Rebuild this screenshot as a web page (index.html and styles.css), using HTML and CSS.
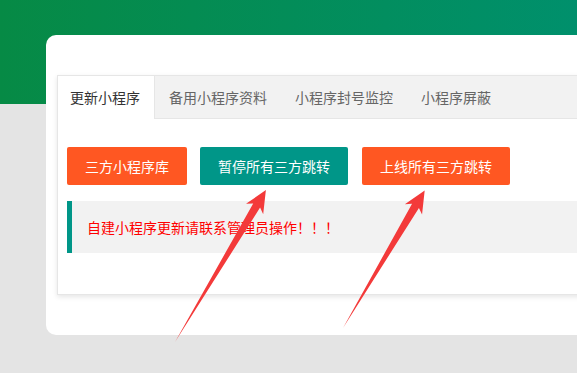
FILE: index.html
```html
<!DOCTYPE html>
<html lang="zh-CN">
<head>
  <meta charset="UTF-8" />
  <meta name="viewport" content="width=device-width, initial-scale=1.0"/>
  <title>小程序管理</title>
  <link rel="stylesheet" href="styles.css">
</head>
<body>
  <div class="top-band"></div>

  <div class="card">
    <div class="tab-card">
      <ul class="tab-title">
        <li class="this">更新小程序</li>
        <li>备用小程序资料</li>
        <li>小程序封号监控</li>
        <li>小程序屏蔽</li>
      </ul>
      <div class="tab-content">
        <div class="btn-row">
          <button class="btn btn-orange">三方小程序库</button>
          <button class="btn btn-teal">暂停所有三方跳转</button>
          <button class="btn btn-orange">上线所有三方跳转</button>
        </div>
        <blockquote class="quote">自建小程序更新请联系管理员操作！！！</blockquote>
      </div>
    </div>
  </div>

  <!-- annotation arrows drawn over the screenshot -->
  <svg class="marks" viewBox="0 0 577 373">
    <polygon transform="translate(175 342) rotate(-59.1)" points="0,0 159,4 155,10 177,0 155,-10 159,-4"/>
    <polygon transform="translate(343 328) rotate(-59.3)" points="0,0 142,4 138,10 160,0 138,-10 142,-4"/>
  </svg>
</body>
</html>
```

FILE: styles.css
```css
html, body {
  margin: 0;
  padding: 0;
}

body {
  position: relative;
  width: 577px;
  height: 373px;
  overflow: hidden;
  background-color: #e4e4e4;
  font-family: "Noto Sans CJK SC", "Microsoft YaHei", sans-serif;
  font-size: 14px;
  color: #333;
}

.top-band {
  height: 104px;
  background: linear-gradient(to right, #068a45, #00906c);
}

.card {
  margin: -69px -40px 0 46px;
  padding: 40px 0 40px 11px;
  background: #fff;
  border-radius: 10px;
}

.tab-card {
  height: 218px;
  border: 1px solid #e6e6e6;
  box-shadow: 0 2px 5px rgba(0, 0, 0, 0.1);
  background: #fff;
}

.tab-title {
  display: flex;
  margin: 0;
  padding: 0;
  list-style: none;
  height: 42px;
  background: #f2f2f2;
  border-bottom: 1px solid #e6e6e6;
}

.tab-title li {
  padding: 0 14px;
  line-height: 42px;
  color: #666;
  white-space: nowrap;
}

.tab-title li.this {
  height: 43px;
  padding-left: 12px;
  background: #fff;
  color: #333;
  border-right: 1px solid #e6e6e6;
}

.tab-content {
  padding: 28px 0 0 9px;
}

.btn-row {
  display: flex;
  gap: 13px;
}

.btn {
  height: 38px;
  padding: 0 18px;
  border: none;
  border-radius: 2px;
  color: #fff;
  font-family: inherit;
  font-size: 14px;
  line-height: 38px;
}

.btn-orange {
  background: #ff5722;
}

.btn-orange:last-child {
  margin-left: 1px;
}

.btn-teal {
  background: #009688;
}

.quote {
  margin: 16px 0 0 0;
  padding: 15px;
  line-height: 22px;
  background: #f2f2f2;
  border-left: 5px solid #009688;
  color: #f00;
}

.marks {
  position: absolute;
  left: 0;
  top: 0;
  width: 577px;
  height: 373px;
  pointer-events: none;
}

.marks polygon {
  fill: #f33a3a;
}
```
